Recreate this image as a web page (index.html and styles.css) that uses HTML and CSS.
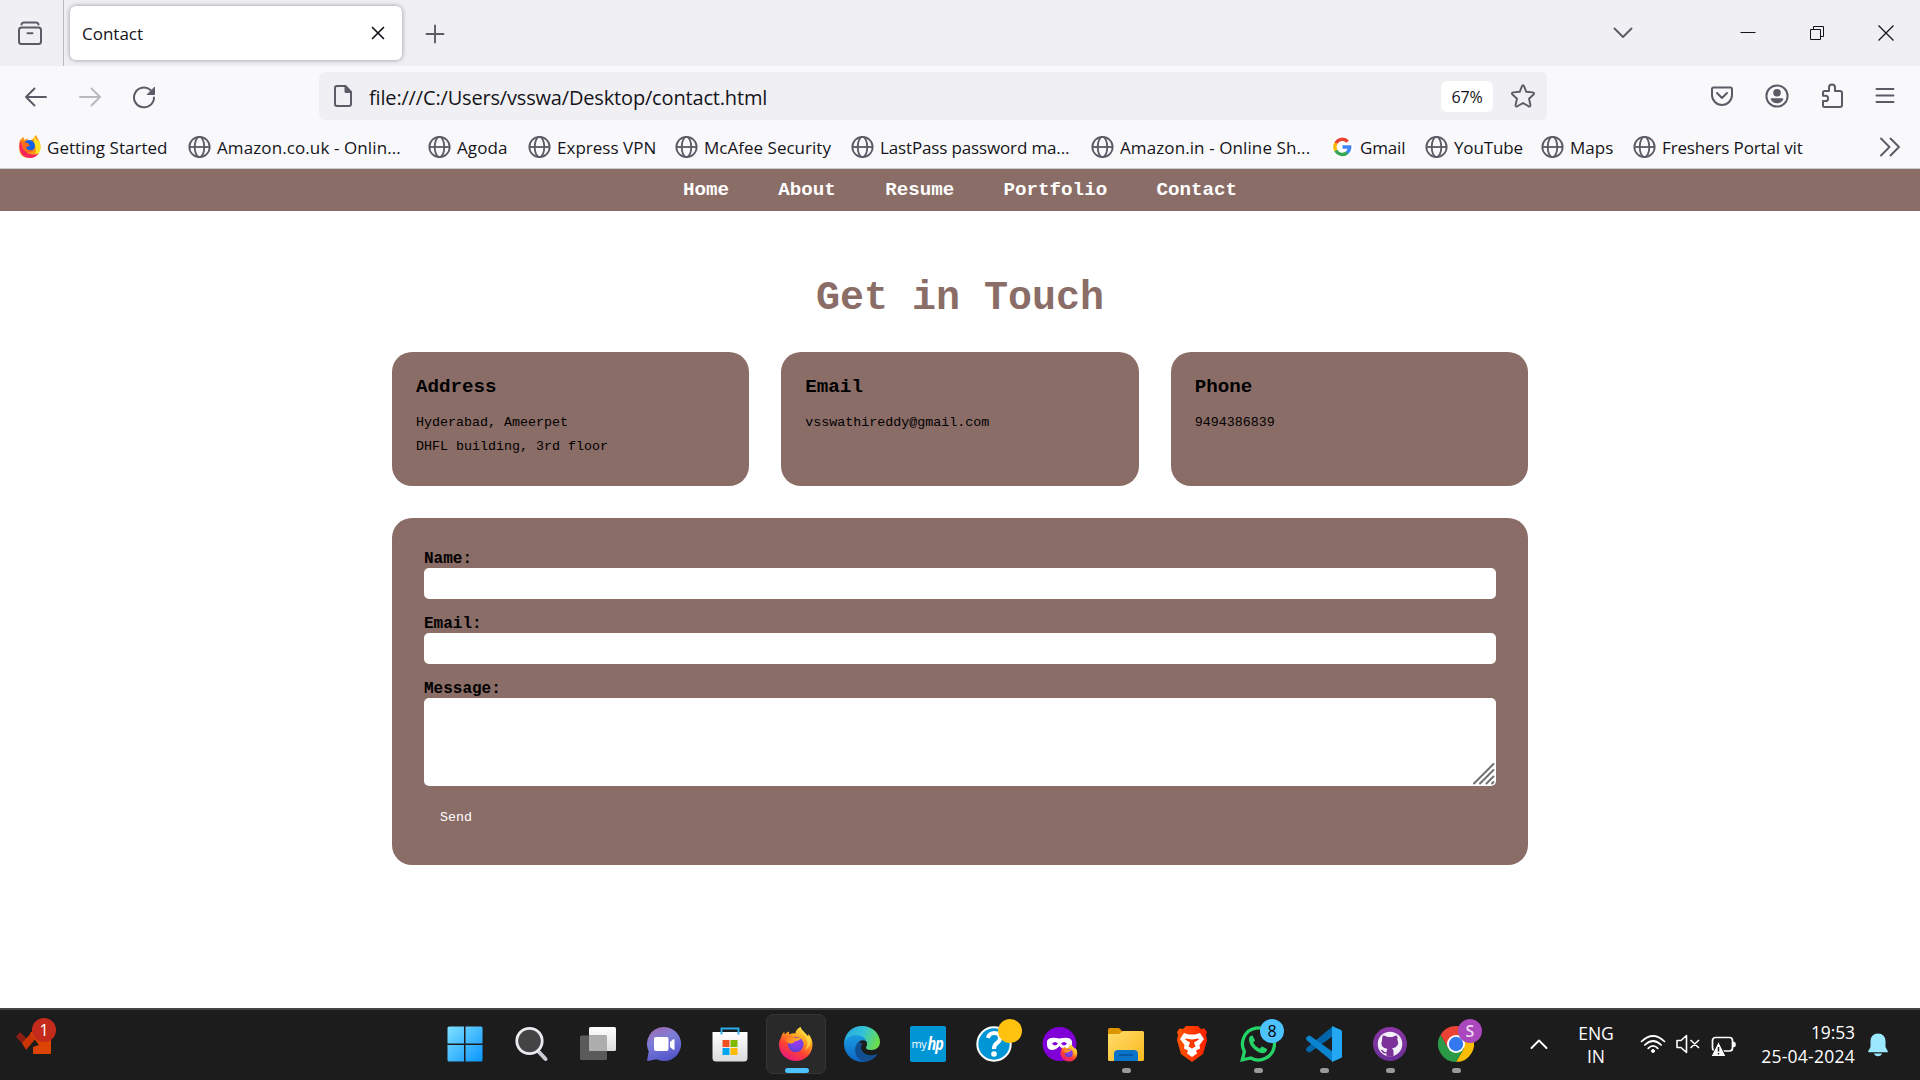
FILE: index.html
```html
<!DOCTYPE html>
<html lang="en">
<head>
<meta charset="utf-8">
<title>Contact</title>
<link rel="stylesheet" href="styles.css">
</head>
<body>
<svg class="defs" width="0" height="0" aria-hidden="true">
  <defs>
    <symbol id="globe" viewBox="0 0 24 24"><g fill="none" stroke="#5b5b66" stroke-width="1.9"><circle cx="12" cy="12" r="10.6"/><ellipse cx="12" cy="12" rx="5" ry="10.6"/><path d="M1.5 12h21"/></g></symbol>
    <linearGradient id="fxOuter" x1="0.8" y1="0" x2="0.25" y2="1"><stop offset="0" stop-color="#fff44f"/><stop offset=".35" stop-color="#ffa01e"/><stop offset=".65" stop-color="#ff4033"/><stop offset="1" stop-color="#e31587"/></linearGradient>
    <radialGradient id="fxCore" cx=".55" cy=".35" r=".7"><stop offset="0" stop-color="#a238f0"/><stop offset=".6" stop-color="#7542e5"/><stop offset="1" stop-color="#5b3ac7"/></radialGradient>
    <linearGradient id="fxFace" x1="0" y1="0" x2="1" y2=".4"><stop offset="0" stop-color="#ff6a24"/><stop offset="1" stop-color="#ffb31f"/></linearGradient>
    <symbol id="firefox" viewBox="0 0 36 36">
      <path fill="url(#fxOuter)" d="M3.1 11.5C3.6 8.600 5 7 6.200 6l.7 2.600C8 7 9.500 6 11.200 5.600L11 8.500C13 7.400 15.500 7 17.500 7.500 17.300 5 19.500 2.300 22.600.7c.3 3.400 4.400 5.700 7.400 9.500l.6-2.200c2.800 3.400 4.100 7.300 3.900 11.300C34 28.300 27 35 18 35S1 28 1 18.500c0-2.700.8-5 2.100-7z"/>
      <circle cx="17.700" cy="18.500" r="7.800" fill="url(#fxCore)"/>
      <path fill="url(#fxFace)" d="M7 10.500c3-1.500 6.500-1.200 9 1l6.500.5c-.3 2-2 2.600-4.500 3-1.300.3-1.500 1.200-3.500 2.200-2.300 1.100-5.100-.2-6.500-2.700z"/>
      <path fill="#ffe04a" opacity=".75" d="M22.600.7c-.8 5.600 6.400 7.400 6.900 16 .2 2.700-.9 5.200-2.700 7.300 4.800-2.300 7.200-7.500 5.700-12.300l-2.500-1.500C27 6.400 22.900 4.100 22.600.7z"/>
    </symbol>
    <linearGradient id="win" x1="0" y1="0" x2="1" y2="1"><stop offset="0" stop-color="#7fe0ff"/><stop offset="1" stop-color="#0a95ff"/></linearGradient>
    <linearGradient id="chat" x1=".2" y1="0" x2=".6" y2="1"><stop offset="0" stop-color="#a06bb0"/><stop offset=".4" stop-color="#7c7ed8"/><stop offset="1" stop-color="#5355cb"/></linearGradient>
    <linearGradient id="paper" x1="0" y1="0" x2="0" y2="1"><stop offset="0" stop-color="#fff"/><stop offset="1" stop-color="#dcdcdc"/></linearGradient>
    <linearGradient id="edgeTop" x1="0" y1=".2" x2="1" y2=".5"><stop offset="0" stop-color="#28a6e0"/><stop offset=".5" stop-color="#33c3d8"/><stop offset="1" stop-color="#6bdc4c"/></linearGradient>
    <linearGradient id="edgeLow" x1="0" y1="0" x2="0" y2="1"><stop offset="0" stop-color="#1b9de2"/><stop offset="1" stop-color="#0b66c2"/></linearGradient>
    <linearGradient id="folder" x1="0" y1="0" x2="1" y2="1"><stop offset="0" stop-color="#ffdc6b"/><stop offset="1" stop-color="#fbb91e"/></linearGradient>
    <linearGradient id="brave" x1="0" y1="0" x2="1" y2="0"><stop offset="0" stop-color="#ff5500"/><stop offset="1" stop-color="#ff2000"/></linearGradient>
    <linearGradient id="git" x1="0" y1="0" x2="0" y2="1"><stop offset="0" stop-color="#8d35a6"/><stop offset="1" stop-color="#6a2f98"/></linearGradient>
  </defs>
</svg>

<header class="browser">
  <div class="tabstrip">
    <div class="view"><svg width="26" height="26" viewBox="0 0 26 26" fill="none" stroke="#5b5b66" stroke-width="2" stroke-linecap="round"><path d="M4.500 4.500Q5 2.500 7 2.500H19Q21 2.500 21.500 4.500"/><rect x="2" y="7.500" width="22" height="16.500" rx="2.500"/><path d="M10.500 13.200h5"/></svg></div>
    <div class="tab"><span>Contact</span><svg width="14" height="14" viewBox="0 0 14 14" stroke="#15141a" stroke-width="1.700" stroke-linecap="round"><path d="M1.500 1.500l11 11M12.500 1.500l-11 11"/></svg></div>
    <svg class="plus" width="20" height="20" viewBox="0 0 20 20" stroke="#5b5b66" stroke-width="1.900" stroke-linecap="round"><path d="M1.500 10h17M10 1.500v17"/></svg>
    <svg class="tablist" width="20" height="12" viewBox="0 0 20 12" fill="none" stroke="#5b5b66" stroke-width="1.900" stroke-linecap="round" stroke-linejoin="round"><path d="M1.500 1.500L10 10l8.500-8.500"/></svg>
    <svg class="min" width="16" height="16" viewBox="0 0 16 16" stroke="#15141a"><path d="M.5 7.500h15"/></svg>
    <svg class="restore" width="16" height="16" viewBox="0 0 16 16" fill="none" stroke="#15141a"><path d="M1.500 4.500h10v10h-10zM4.500 4.500v-3h10v10h-3"/></svg>
    <svg class="close" width="18" height="18" viewBox="0 0 18 18" stroke="#15141a" stroke-width="1.300"><path d="M1.500 1.500l15 15M16.500 1.500l-15 15"/></svg>
  </div>
  <div class="toolbar">
    <div class="navbtns">
      <svg width="24" height="24" viewBox="0 0 24 24" fill="none" stroke="#5b5b66" stroke-width="1.900" stroke-linecap="round" stroke-linejoin="round"><path d="M22 12H2.500M10.500 3.500L2 12l8.500 8.500"/></svg>
      <svg class="dim" width="24" height="24" viewBox="0 0 24 24" fill="none" stroke="#5b5b66" stroke-width="1.900" stroke-linecap="round" stroke-linejoin="round"><path d="M2 12h19.500M13.500 3.500L22 12l-8.500 8.500"/></svg>
      <svg width="24" height="24" viewBox="0 0 24 24" fill="none" stroke="#5b5b66" stroke-width="2" stroke-linecap="round" stroke-linejoin="round"><path d="M22 12.500A10 9.800 0 1 1 18.500 5"/><path fill="#5b5b66" stroke-width="1" d="M22.500 2.500v7h-7z"/></svg>
    </div>
    <div class="urlbar">
      <svg class="doc" width="20" height="24" viewBox="0 0 20 24"><path fill="none" stroke="#5b5b66" stroke-width="2" d="M4 2h8.500L18 8v12q0 2-2 2H4q-2 0-2-2V4q0-2 2-2z"/><path fill="#5b5b66" d="M11.500 1.500L18.500 9h-5.500q-1.500 0-1.500-1.500z"/></svg>
      <span class="url">file:///C:/Users/vsswa/Desktop/contact.html</span>
      <span class="zoom">67%</span>
      <svg class="star" width="26" height="26" viewBox="0 0 26 26" fill="none" stroke="#5b5b66" stroke-width="1.900" stroke-linejoin="round"><path d="M13 2.200Q13.600 2.200 14 3.200L16.300 8.800 22.600 9.400Q25 9.800 23.500 11.500L19 15.700 20.400 21.800Q20.700 24.200 18.600 23.300L13 20 7.400 23.300Q5.300 24.200 5.600 21.800L7 15.700 2.500 11.500Q1 9.800 3.400 9.400L9.700 8.800 12 3.200Q12.400 2.200 13 2.200z"/></svg>
    </div>
    <div class="tools">
      <svg width="24" height="24" viewBox="0 0 24 24" fill="none" stroke="#5b5b66" stroke-width="2" stroke-linecap="round" stroke-linejoin="round"><path d="M3.500 3.500h17Q22 3.500 22 5v6a10 10 0 0 1-20 0V5q0-1.500 1.500-1.500zM7 9l5 5 5-5"/></svg>
      <svg width="24" height="24" viewBox="0 0 24 24"><circle cx="12" cy="12" r="10.600" fill="none" stroke="#5b5b66" stroke-width="2"/><circle cx="12" cy="8.700" r="3.800" fill="#5b5b66"/><path fill="#5b5b66" d="M6.500 14.200h11q1 0 .8 1-1.800 4-6.300 4t-6.300-4q-.2-1 .8-1z"/></svg>
      <svg width="24" height="26" viewBox="0 0 24 26" fill="none" stroke="#5b5b66" stroke-width="2" stroke-linejoin="round"><path d="M3 9.500q0-1.500 1.500-1.500H9V4.500a3 3 0 0 1 6 0V8h5q2 0 2 2v12q0 2-2 2H4.500Q3 24 3 22.500V18H5.500a2.600 2.600 0 0 0 0-5.200H3z"/></svg>
      <svg width="20" height="20" viewBox="0 0 20 20" stroke="#5b5b66" stroke-width="1.900" stroke-linecap="round"><path d="M1.500 3h17M1.500 9.500h17M1.500 16h17"/></svg>
    </div>
  </div>
  <div class="bookmarks">
    <div class="bm" style="width:170px"><svg width="23" height="24"><path fill="#ff9417" d="M2 5l3-3 2 3 3-2-1 4 6-3 3-4 4 8c2 8-3 15-11 15S-.5 18 2 5z"/><path fill="#ffe226" d="M16 1l3 4 2 1c4 8 0 14-5 16 3-6 2-10 0-14z"/><path fill="#f4245f" d="M2 6c-2 8 1 17 10 17 4 0 7-2 9-5-5 3-13 2-14-4z"/><circle cx="11" cy="11" r="6" fill="#0a62e8"/><path fill="#ff6a1a" d="M2 5c2 2 5 2 8 3l2 3-4 1c1 4 5 4 8 2-1 4-8 5-11 0z"/></svg><span class="loose">Getting Started</span></div>
    <div class="bm" style="width:240px"><svg width="23" height="24"><use href="#globe"/></svg><span class="looser">Amazon.co.uk - Onlin...</span></div>
    <div class="bm" style="width:100px"><svg width="23" height="24"><use href="#globe"/></svg><span class="looser">Agoda</span></div>
    <div class="bm" style="width:147px"><svg width="23" height="24"><use href="#globe"/></svg><span class="loose">Express VPN</span></div>
    <div class="bm" style="width:176px"><svg width="23" height="24"><use href="#globe"/></svg><span class="loose">McAfee Security</span></div>
    <div class="bm" style="width:240px"><svg width="23" height="24"><use href="#globe"/></svg><span>LastPass password ma...</span></div>
    <div class="bm" style="width:240px"><svg width="23" height="24"><use href="#globe"/></svg><span class="looser">Amazon.in - Online Sh...</span></div>
    <div class="bm" style="width:94px"><svg width="23" height="24" viewBox="0 0 23 24" fill="none" stroke-width="3.400"><circle cx="11.500" cy="12" r="11" fill="#fff"/><path stroke="#ea4335" d="M4.800 8.300A7.500 7.500 0 0 1 16.700 6.500"/><path stroke="#fbbc05" d="M4.900 15.600A7.500 7.500 0 0 1 4.900 8.200"/><path stroke="#34a853" d="M4.800 15.500A7.500 7.500 0 0 0 16.300 17.600"/><path stroke="#4285f4" d="M16.100 17.700A7.500 7.500 0 0 0 18.700 12H11.500"/></svg><span>Gmail</span></div>
    <div class="bm" style="width:116px"><svg width="23" height="24"><use href="#globe"/></svg><span>YouTube</span></div>
    <div class="bm" style="width:92px"><svg width="23" height="24"><use href="#globe"/></svg><span class="loose">Maps</span></div>
    <div class="bm" style="width:180px"><svg width="23" height="24"><use href="#globe"/></svg><span>Freshers Portal vit</span></div>
    <svg class="more" width="22" height="20" viewBox="0 0 22 20" fill="none" stroke="#5b5b66" stroke-width="1.900" stroke-linecap="round" stroke-linejoin="round"><path d="M2 1.500l8.500 8.500L2 18.500M11.500 1.500L20 10l-8.500 8.500"/></svg>
  </div>
</header>

<main class="page">
  <nav class="sitenav"><a>Home</a><a>About</a><a>Resume</a><a>Portfolio</a><a>Contact</a></nav>
  <h1>Get in Touch</h1>
  <div class="content">
    <div class="cards">
      <section class="card"><h2>Address</h2><p>Hyderabad, Ameerpet<br>DHFL building, 3rd floor</p></section>
      <section class="card"><h2>Email</h2><p>vsswathireddy@gmail.com</p></section>
      <section class="card"><h2>Phone</h2><p>9494386839</p></section>
    </div>
    <form class="form">
      <label>Name:</label><div class="field"></div>
      <label>Email:</label><div class="field"></div>
      <label>Message:</label><div class="field area"><svg width="22" height="22" viewBox="0 0 22 22" stroke="#6e6e6e" stroke-width="1.900" stroke-linecap="round"><path d="M1 20.500L20.500 1M7 20.500L20.500 7M13.500 20.500L20.500 13.500M19 20.500L20.500 19"/></svg></div>
      <div class="send">Send</div>
    </form>
  </div>
</main>

<footer class="taskbar">
  <div class="widget"><svg width="38" height="30" viewBox="0 0 38 30"><path fill="#8c1d12" d="M1 12l4-5 7 7-3 6z"/><path fill="#cb3405" d="M7 18L18 6l5 5-12 14z"/><path fill="#dc4404" d="M15 8l4-3 9 9 8-6v20q0 1-1 1H19q-1 0-1-1v-6l6-2z"/></svg><b class="badge red">1</b></div>
  <div class="apps">
    <div class="app start"><svg width="36" height="36" viewBox="0 0 36 36" fill="url(#win)"><path d="M2 .5h15v17H.5V2Q.5.5 2 .5zM18.500.5H34Q35.500.5 35.500 2v15.500h-17zM.5 19h16.500v16.500H2Q.5 35.500.5 34zM18.500 19h17v15q0 1.500-1.500 1.500H18.500z"/></svg></div>
    <div class="app"><svg width="36" height="36" viewBox="0 0 36 36"><path d="M24 25l7.500 8" stroke="#c9cdd6" stroke-width="4" stroke-linecap="round"/><circle cx="15.500" cy="15" r="12.700" fill="#444" stroke="#e9ebef" stroke-width="2.800"/></svg></div>
    <div class="app"><svg width="36" height="36" viewBox="0 0 36 36"><rect x="9" y="1" width="27" height="24" rx="1.500" fill="url(#paper)"/><rect y="9.500" width="27" height="24.500" rx="1.500" fill="#5a5a5a"/><path fill="#adadad" d="M9 9.500h18v15.500H9z"/></svg></div>
    <div class="app"><svg width="36" height="36" viewBox="0 0 36 36"><path fill="url(#chat)" d="M18 1a17 17 0 1 1-7.500 32.200L2 35q-1 0-.8-1l1.500-8.500A17 17 0 0 1 18 1z"/><rect x="8" y="11" width="14.500" height="14" rx="2" fill="#fff"/><path fill="#fff" d="M24 16l3-2.500q1.500-1 1.500.5v9q0 1.500-1.500.5L24 21z"/></svg></div>
    <div class="app"><svg width="36" height="36" viewBox="0 0 36 36"><path fill="url(#paper)" d="M.5 6h35v26q0 3.500-3.500 3.500H4Q.5 35.500.5 32z"/><path d="M9.500 8.500v-6h17v6" fill="none" stroke="#29abe8" stroke-width="1.900"/><path fill="#f25022" d="M10.500 14h7v7h-7z"/><path fill="#7fba00" d="M18.500 14h7v7h-7z"/><path fill="#00a4ef" d="M10.500 22h7v7h-7z"/><path fill="#ffb900" d="M18.500 22h7v7h-7z"/></svg></div>
    <div class="app active"><svg width="36" height="36"><use href="#firefox"/></svg><i></i></div>
    <div class="app"><svg width="36" height="36" viewBox="0 0 36 36"><path fill="url(#edgeLow)" d="M0 17C1 11 6 8.500 12 8.500c7 0 12 4 12.500 9-2-3-6-4-8.500-2.500-6 4-2 16 7 20.200A18 18 0 0 1 0 17z"/><path fill="#124f91" d="M14.500 16C7 23 13 36 22 35.500c6-.5 10.500-5 11.500-8-5 3-12 2-15-2-2-2.500-2-5 0-8z"/><path fill="url(#edgeTop)" d="M0 17C1 7 8 0 18 0c11 0 18 8 18 16 0 5-4 8-8.500 8-4 0-6-1.500-5.500-2.500 1.500-2 1.500-5-.5-8C17 7 4 8 0 17z"/></svg></div>
    <div class="app"><div class="hp"><span>my</span><b>hp</b></div></div>
    <div class="app"><svg width="36" height="36" viewBox="0 0 36 36"><circle cx="18" cy="18" r="16.700" fill="#0096d6" stroke="#fff" stroke-width="2"/><path d="M12 12q1-5 6.500-5 5.500 0 5.500 5 0 3-3 5-3 2-3 6" fill="none" stroke="#fff" stroke-width="4"/><circle cx="18" cy="28" r="2.800" fill="#fff"/></svg><b class="badge gold"></b></div>
    <div class="app"><svg width="36" height="36" viewBox="0 0 36 36"><circle cx="17.500" cy="18" r="17" fill="#8000d7"/><path fill="#fff" fill-rule="evenodd" d="M5 15q2-5 12.500-2.500Q28 10 30 15q1 9-5 9-4 0-7.500-4-3.500 4-7.500 4-6 0-5-9zm5 2.500q3 4 6 0-3-3-6 0zm9 0q3 4 6 0-3-3-6 0z"/><svg x="18" y="18" width="18" height="18"><use href="#firefox"/></svg></svg></div>
    <div class="app"><svg width="36" height="36" viewBox="0 0 36 36"><path fill="#dd9600" d="M0 9V3.500Q0 2 1.500 2H11l4 4-2 4z"/><path fill="url(#folder)" d="M0 8h11l4-3h19.500Q36 5 36 6.500v27q0 1.500-1.500 1.500h-33Q0 35 0 33.500z"/><path fill="#0a74c9" d="M6 35v-7q0-4 4-4h16q4 0 4 4v7z"/><path d="M11 29h14" stroke="#06519b" stroke-width="1.600"/></svg><i class="dot"></i></div>
    <div class="app"><svg width="36" height="36" viewBox="0 0 36 36"><path fill="url(#brave)" d="M12 0h12l3 3 3.500-.5L33 6l-1 3 1 5-4 14-11 8L7 28 3 14l1-5-1-3 2.500-3.500L9 3z"/><path fill="#fff" fill-rule="evenodd" d="M10 7l5 1.500h6L26 7l4 6-4.500 6 .5 3.500-4 2 1 3-5 3.500-5-3.500 1-3-4-2 .5-3.500L6 13zm1 6.500l5 3-1.500 4 3.500 2 3.500-2-1.500-4 5-3-1-1-5.500 1h-1l-5.500-1z"/></svg></div>
    <div class="app"><svg width="36" height="36" viewBox="0 0 36 36"><path fill="none" stroke="#25d366" stroke-width="3.300" d="M2.300 33.800l2.100-8.200A16 16 0 1 1 10.800 32z"/><path fill="#25d366" d="M9 12q1-3 3.500-2.500l2.500 5-1.800 2.300q2.300 4.200 6.300 6l2.500-2.200 5 2.500q.2 3-3 4-3 .8-7.500-2Q8 19 9 12z"/></svg><b class="badge blue">8</b><i class="dot"></i></div>
    <div class="app"><svg width="36" height="36" viewBox="0 0 36 36"><path fill="#0065a9" d="M0 23.500q0 1 .8 1.600l1.700 1.200q1 .5 2-.2L27 10V0L1 21.500q-1 1-1 2z"/><path fill="#0b84d0" d="M0 12.500q0-1 .8-1.600l1.700-1.200q1-.5 2 .2L27 26v10L1 14.500q-1-1-1-2z"/><path fill="#24a7f2" d="M26 0l9 4q1 .5 1 1.500v25q0 1-1 1.500l-9 4z"/></svg><i class="dot"></i></div>
    <div class="app"><svg width="36" height="36" viewBox="0 0 36 36"><circle cx="18" cy="18" r="17" fill="url(#git)"/><circle cx="18" cy="18" r="12.300" fill="#f2f0f8"/><path fill="#7b3299" d="M11 9.500q3 0 4.500 1.500h5q1.500-1.500 4.500-1.500.8 2 .3 4 3.200 7-5.300 9 1.500 1 1.500 3v5h-7v-3q-3.500.5-5-2.500l-1-1.200q2-.5 3.500 1.700 1 1 2.500.5.2-2 1-3-8.500-2-5.300-9-.5-2 .8-4.500z"/></svg><i class="dot"></i></div>
    <div class="app"><svg width="36" height="36" viewBox="0 0 36 36"><path fill="#ea4335" d="M2.400 9A18 18 0 0 1 33.600 9H18v9l-7.800 4.500z"/><path fill="#fbbc04" d="M33.600 9A18 18 0 0 1 18 36l7.800-13.500L18 9z"/><path fill="#2a9a47" d="M18 36A18 18 0 0 1 2.400 9l7.800 13.500L18 18l7.800 4.500z"/><circle cx="18" cy="18" r="9" fill="#fff"/><circle cx="18" cy="18" r="7.200" fill="#3478f0"/></svg><b class="badge violet">S</b><i class="dot"></i></div>
  </div>
  <div class="tray">
    <svg class="up" width="18" height="12" viewBox="0 0 18 12" fill="none" stroke="#fff" stroke-width="1.900" stroke-linecap="round" stroke-linejoin="round"><path d="M1.500 10L9 2.500l7.500 7.500"/></svg>
    <div class="lang">ENG<br>IN</div>
    <svg class="wifi" width="26" height="20" viewBox="0 0 26 20" fill="none" stroke="#fff" stroke-width="1.700" stroke-linecap="round"><path d="M1.500 7.500Q13-3.500 24.500 7.500M4.800 11Q13 3 21.200 11M8.200 14.300Q13 9.500 17.800 14.300"/><circle cx="13" cy="17" r="1.500" fill="#fff" stroke-width="1"/></svg>
    <svg class="spk" width="24" height="20" viewBox="0 0 24 20" fill="none" stroke="#fff" stroke-width="1.600" stroke-linejoin="round"><path d="M1 6.500h4l5.500-5v17L5 13.500H1zM14.500 6l8.500 8M23 6l-8.500 8"/></svg>
    <svg class="bat" width="26" height="22" viewBox="0 0 26 22"><rect x="1.500" y="2.500" width="20" height="13.500" rx="3" fill="none" stroke="#fff" stroke-width="1.700"/><path fill="#fff" d="M22 6.500l2.500 1q.5 2 0 4l-2.500 1z"/><path fill="#fff" stroke="#1c1c1c" stroke-width="1" d="M7.500 6.500L15 21.500H0z"/><path d="M7.500 12v4.500M7.500 18v1.600" stroke="#1c1c1c" stroke-width="1.500"/></svg>
    <div class="clock">19:53<br><span class="date">25-04-2024</span></div>
    <svg class="bell" width="20" height="24" viewBox="0 0 20 24" fill="#9be9ff"><path d="M10 .5q7 0 7.500 7.500v6l2.200 4q.5 1.300-.7 1.300H1q-1.200 0-.7-1.300l2.200-4V8Q3 .5 10 .5zM6 20.500h8q-.8 2.800-4 2.800t-4-2.800z"/></svg>
  </div>
</footer>
</body>
</html>
```

FILE: styles.css
```css
* { box-sizing: border-box; }
body { margin: 0; width: 1920px; height: 1080px; overflow: hidden; display: flex; flex-direction: column; background: #fff; font-family: "Open Sans", "Noto Sans", sans-serif; color: #15141a; }
svg { display: block; flex: none; }
.defs { position: absolute; }

.browser { flex: none; height: 169px; background: #f9f9fb; border-bottom: 1px solid #c8cbcd; }
.tabstrip { height: 66px; background: #f0f0f4; display: flex; align-items: center; }
.view { width: 64px; height: 66px; border-right: 1px solid #b9b9c0; display: flex; align-items: center; padding-left: 17px; }
.tab { width: 332px; height: 54px; margin-left: 6px; border-radius: 6px; background: #fff; box-shadow: 0 0 5px rgba(0,0,0,.38); display: flex; align-items: center; justify-content: space-between; padding: 0 17px 0 12px; font-size: 17px; }
.plus { margin: 1px 0 0 23px; }
.tablist { margin-left: 1168px; }
.min { margin-left: 107px; }
.restore { margin-left: 53px; }
.close { margin-left: 52px; }

.toolbar { height: 60px; display: flex; align-items: center; }
.navbtns { display: flex; gap: 30px; width: 319px; padding: 2px 0 0 24px; }
.dim { opacity: .4; }
.urlbar { width: 1228px; height: 48px; border-radius: 6px; background: #f0f0f4; display: flex; align-items: center; padding: 0 11px 0 14px; }
.url { flex: 1; margin-left: 16px; padding-top: 2px; font-size: 20px; letter-spacing: -.17px; }
.zoom { width: 52px; height: 31px; margin: 1px 17px 0 0; border-radius: 6px; background: #fff; font-size: 16px; letter-spacing: -.2px; line-height: 32px; text-align: center; }
.tools { display: flex; align-items: center; gap: 31px; margin-left: 163px; }

.bookmarks { height: 42px; display: flex; align-items: center; padding-left: 18px; font-size: 17px; letter-spacing: -.14px; white-space: nowrap; }
.bm { flex: none; display: flex; align-items: center; gap: 6px; }
.loose { letter-spacing: .02px; }
.looser { letter-spacing: .1px; }
.more { margin-left: 66px; }

.page { flex: 1; font-family: "Courier New", "Liberation Mono", monospace; color: #000; }
.sitenav { height: 42px; background: #8b6d67; display: flex; justify-content: center; align-items: center; gap: 49.300px; color: #fff; font-size: 19.200px; font-weight: 700; }
h1 { margin: 65px 0 31px; height: 45px; line-height: 45px; font-size: 40px; text-align: center; color: #8b6d67; }
.content { width: 1136px; margin: 0 auto; }
.cards { display: grid; grid-template-columns: repeat(3, 1fr); gap: 32px; }
.card { height: 134px; border-radius: 20px; background: #8b6d67; padding: 24px; }
h2 { margin: 0; font-size: 19.200px; line-height: 22px; }
p { margin: 13px 0 0; font-size: 13.333px; line-height: 24px; }
.form { margin-top: 32px; height: 347px; border-radius: 20px; background: #8b6d67; padding: 32px; }
label { display: block; height: 18px; line-height: 19px; font-size: 16px; font-weight: 700; }
.field { height: 31px; margin-bottom: 16px; border-radius: 5px; background: #fff; }
.area { height: 88px; display: flex; justify-content: flex-end; align-items: flex-end; padding: 0 1px 1px 0; }
.send { padding: 7px 16px; font-size: 13.333px; line-height: 18px; color: #fff; }

.taskbar { flex: none; height: 72px; background: #1c1c1c; border-top: 2px solid #444; display: flex; color: #fff; }
.widget { position: relative; width: 436px; padding: 15px 0 0 15px; }
.apps { display: flex; gap: 6px; padding-top: 4px; }
.app { position: relative; width: 60px; height: 60px; display: flex; align-items: center; justify-content: center; border-radius: 7px; }
.start { padding-right: 3px; }
.active { background: #292929; border: 1px solid #353535; }
.app i { position: absolute; left: 18px; bottom: 0; width: 24px; height: 5px; border-radius: 3px; background: #4cc2ff; }
.app .dot { left: 26px; bottom: 1px; width: 9px; background: #9a9a9a; }
.badge { position: absolute; top: 5px; right: 4px; width: 24px; height: 24px; border-radius: 50%; font-size: 16px; font-weight: 400; line-height: 24px; text-align: center; }
.red { left: 32px; top: 8px; background: #c42b1c; }
.gold { background: #ffc20e; right: 2px; }
.blue { background: #4cc2ff; color: #000; }
.violet { background: #ab47bc; color: #f0d8f4; font-weight: 600; }
.hp { width: 36px; height: 36px; border-radius: 2px; background: #0096d6; display: flex; align-items: center; justify-content: center; font-size: 11px; line-height: 36px; letter-spacing: -.5px; }
.hp b { font-size: 17px; font-style: italic; letter-spacing: -1px; transform: scaleX(.85); }

.tray { display: flex; margin-left: 36px; font-size: 17.500px; letter-spacing: -.1px; }
.up { margin-top: 28px; margin-left: 8px; }
.lang { width: 60px; margin-left: 18px; margin-top: 12px; line-height: 23px; text-align: center; }
.wifi { margin: 24px 0 0 14px; }
.spk { margin: 24px 0 0 10px; }
.bat { margin: 25px 0 0 11px; }
.clock { width: 100px; margin: 10px 0 0 18px; line-height: 24px; text-align: right; }
.date { letter-spacing: .25px; }
.bell { margin: 23px 0 0 13px; }
```
